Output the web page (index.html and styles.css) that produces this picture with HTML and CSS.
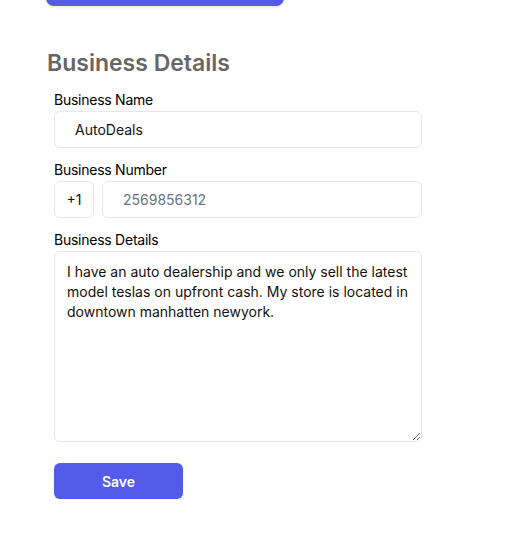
FILE: index.html
```html
<!DOCTYPE html>
<html lang="en">
<head>
  <meta charset="UTF-8" />
  <meta name="viewport" content="width=device-width, initial-scale=1.0"/>
  <title>Business Details</title>
  <link rel="stylesheet" href="styles.css">
</head>
<body>
  <div class="page">
    <button class="top-btn" aria-label="Continue"></button>

    <h2 class="section-title">Business Details</h2>

    <form class="details-form">
      <label class="field">
        <span class="field-label">Business Name</span>
        <input class="text-input name-input" type="text" value="AutoDeals">
      </label>

      <div class="field">
        <span class="field-label">Business Number</span>
        <div class="phone-row">
          <div class="country-code">+1</div>
          <input class="text-input phone-input" type="text" placeholder="2569856312">
        </div>
      </div>

      <label class="field">
        <span class="field-label">Business Details</span>
        <textarea class="text-area">I have an auto dealership and we only sell the latest model teslas on upfront cash. My store is located in downtown manhatten newyork.</textarea>
      </label>

      <button type="button" class="save-btn">Save</button>
    </form>
  </div>
</body>
</html>
```

FILE: styles.css
```css
body {
  font-family: Inter, 'Noto Sans', sans-serif;
  margin: 0;
  padding: 0;
  background: #fff;
  color: #111;
}
.page {
  padding-left: 46px;
}
.top-btn {
  display: block;
  width: 238px;
  height: 40px;
  margin-top: -34px;
  border: none;
  border-radius: 8px;
  background: #545be8;
  box-shadow: 0 1px 3px rgba(0,0,0,0.12);
}
.section-title {
  margin: 41px 0 0 1px;
  font-size: 23px;
  font-weight: 600;
  line-height: 32px;
  color: #666;
}
.details-form {
  margin-left: 8px;
  width: 368px;
  padding-top: 11px;
}
.field {
  display: block;
  margin-bottom: 12px;
}
.field-label {
  display: block;
  font-size: 14px;
  font-weight: 400;
  letter-spacing: -0.25px;
  line-height: 20px;
  margin-bottom: 1px;
  color: #000;
}
.text-input {
  box-sizing: border-box;
  height: 37px;
  border: 1px solid #e2e8f0;
  border-radius: 6px;
  font-family: inherit;
  font-size: 14px;
  color: #111;
  outline: none;
}
.name-input {
  width: 100%;
  padding: 0 20px;
}
.phone-row {
  display: flex;
  gap: 8px;
}
.country-code {
  box-sizing: border-box;
  width: 40px;
  height: 37px;
  border: 1px solid #e2e8f0;
  border-radius: 6px;
  display: flex;
  align-items: center;
  justify-content: center;
  font-size: 14px;
  color: #111;
}
.phone-input {
  flex: 1;
  padding: 0 20px;
}
.phone-input::placeholder {
  color: #6b7280;
}
.text-area {
  display: block;
  box-sizing: border-box;
  width: 100%;
  height: 191px;
  padding: 10px 12px;
  border: 1px solid #e2e8f0;
  border-radius: 6px;
  font-family: inherit;
  font-size: 14px;
  line-height: 20px;
  color: #111;
  outline: none;
}
.save-btn {
  margin-top: 9px;
  width: 129px;
  height: 36px;
  border: none;
  border-radius: 6px;
  background: #545be8;
  color: #fff;
  font-family: inherit;
  font-size: 14px;
  font-weight: 600;
  box-shadow: 0 1px 2px rgba(0,0,0,0.1);
}
```
